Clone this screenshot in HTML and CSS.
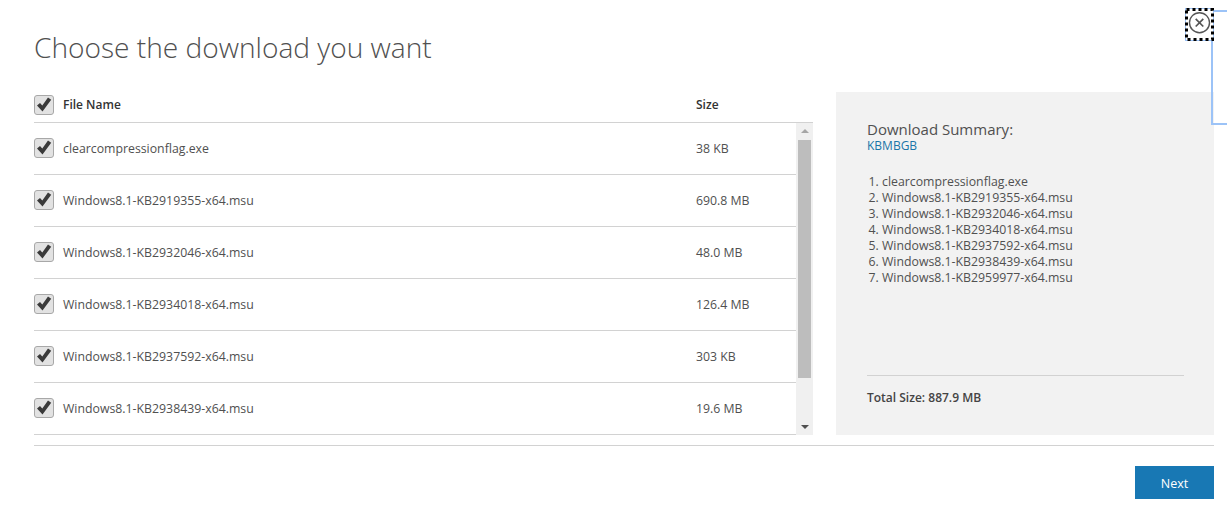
FILE: index.html
```html
<!DOCTYPE html>
<html lang="en">
<head>
    <meta charset="UTF-8">
    <title>Choose the download you want</title>
    <link rel="stylesheet" href="styles.css">
</head>
<body>
    <div class="dialog">
        <h1 class="title">Choose the download you want</h1>

        <div class="content">
            <div class="files">
                <div class="files-header">
                    <svg class="check" viewBox="0 0 20 20"><rect x="0.5" y="0.5" width="19" height="19" rx="2.500"/><path d="M3 10.500l3-2.500 2.300 2.500 5.700-8 3.200 2.200-8.700 11.800z"/></svg>
                    <span class="col-name">File Name</span>
                    <span class="col-size">Size</span>
                </div>
                <div class="files-body">
                    <div class="files-list">
                        <div class="file-row">
                            <svg class="check" viewBox="0 0 20 20"><rect x="0.5" y="0.5" width="19" height="19" rx="2.500"/><path d="M3 10.500l3-2.500 2.300 2.500 5.700-8 3.200 2.200-8.700 11.800z"/></svg>
                            <span class="col-name">clearcompressionflag.exe</span>
                            <span class="col-size">38 KB</span>
                        </div>
                        <div class="file-row">
                            <svg class="check" viewBox="0 0 20 20"><rect x="0.5" y="0.5" width="19" height="19" rx="2.500"/><path d="M3 10.500l3-2.500 2.300 2.500 5.700-8 3.200 2.200-8.700 11.800z"/></svg>
                            <span class="col-name">Windows8.1-KB2919355-x64.msu</span>
                            <span class="col-size">690.8 MB</span>
                        </div>
                        <div class="file-row">
                            <svg class="check" viewBox="0 0 20 20"><rect x="0.5" y="0.5" width="19" height="19" rx="2.500"/><path d="M3 10.500l3-2.500 2.300 2.500 5.700-8 3.200 2.200-8.700 11.800z"/></svg>
                            <span class="col-name">Windows8.1-KB2932046-x64.msu</span>
                            <span class="col-size">48.0 MB</span>
                        </div>
                        <div class="file-row">
                            <svg class="check" viewBox="0 0 20 20"><rect x="0.5" y="0.5" width="19" height="19" rx="2.500"/><path d="M3 10.500l3-2.500 2.300 2.500 5.700-8 3.200 2.200-8.700 11.800z"/></svg>
                            <span class="col-name">Windows8.1-KB2934018-x64.msu</span>
                            <span class="col-size">126.4 MB</span>
                        </div>
                        <div class="file-row">
                            <svg class="check" viewBox="0 0 20 20"><rect x="0.5" y="0.5" width="19" height="19" rx="2.500"/><path d="M3 10.500l3-2.500 2.300 2.500 5.700-8 3.200 2.200-8.700 11.800z"/></svg>
                            <span class="col-name">Windows8.1-KB2937592-x64.msu</span>
                            <span class="col-size">303 KB</span>
                        </div>
                        <div class="file-row">
                            <svg class="check" viewBox="0 0 20 20"><rect x="0.5" y="0.5" width="19" height="19" rx="2.500"/><path d="M3 10.500l3-2.500 2.300 2.500 5.700-8 3.200 2.200-8.700 11.800z"/></svg>
                            <span class="col-name">Windows8.1-KB2938439-x64.msu</span>
                            <span class="col-size">19.6 MB</span>
                        </div>
                    </div>
                    <div class="scrollbar">
                        <div class="arrow-up"></div>
                        <div class="thumb"></div>
                        <div class="arrow-down"></div>
                    </div>
                </div>
            </div>

            <div class="summary">
                <div class="summary-top">
                    <h2>Download Summary:</h2>
                    <div class="kb">KBMBGB</div>
                    <ol class="summary-list">
                        <li>clearcompressionflag.exe</li>
                        <li>Windows8.1-KB2919355-x64.msu</li>
                        <li>Windows8.1-KB2932046-x64.msu</li>
                        <li>Windows8.1-KB2934018-x64.msu</li>
                        <li>Windows8.1-KB2937592-x64.msu</li>
                        <li>Windows8.1-KB2938439-x64.msu</li>
                        <li>Windows8.1-KB2959977-x64.msu</li>
                    </ol>
                </div>
                <div class="total">Total Size: 887.9 MB</div>
            </div>
        </div>

        <div class="footer">
            <button class="next" type="button">Next</button>
        </div>
    </div>

    <!-- focus line and close button sit over the dialog -->
    <div class="focus-line"></div>
    <svg class="close" viewBox="0 0 29 33" aria-label="Close">
        <rect x="0.500" y="0.500" width="28" height="32" fill="#fff" stroke="#9cc3f7" stroke-width="1"/>
        <rect x="1.500" y="1.500" width="26" height="30" fill="#fff" stroke="#000" stroke-width="3" stroke-dasharray="3 3"/>
        <circle cx="14.500" cy="14.700" r="10" fill="none" stroke="#555" stroke-width="1.400"/>
        <path d="M10.700 10.900l7.600 7.600M18.300 10.900l-7.600 7.600" fill="none" stroke="#555" stroke-width="1.700"/>
    </svg>
</body>
</html>
```

FILE: styles.css
```css
* {
    box-sizing: border-box;
    margin: 0;
    padding: 0;
}

body {
    background: white;
    color: #505050;
    font-family: "Open Sans", "Noto Sans", sans-serif;
    font-size: 12.300px;
    height: 516px;
    overflow: hidden;
}

.dialog {
    padding: 0 13px 0 34px;
}

.title {
    font-size: 28.100px;
    font-weight: 300;
    line-height: 40px;
    padding-top: 27px;
    height: 92px;
    color: #505050;
}

.content {
    display: flex;
    gap: 23px;
    height: 343px;
}

.files {
    width: 779px;
    display: flex;
    flex-direction: column;
}

.files-header {
    height: 31px;
    display: flex;
    align-items: center;
    border-bottom: 1px solid #d2d2d2;
    padding-bottom: 6px;
    font-size: 12px;
    font-weight: 600;
    color: #333;
}

.files-header .check {
    margin-top: 1px;
}

.file-row .check {
    margin-bottom: 1px;
}

.check {
    width: 20px;
    height: 20px;
    flex: none;
    margin-right: 9px;
}

.check rect {
    fill: #e2e2e2;
    stroke: #a8a8a8;
}

.check path {
    fill: #3a3a3a;
}

.col-name {
    flex: 1;
}

.col-size {
    width: 117px;
}

.file-row .col-size {
    width: 100px;
}

.files-body {
    flex: 1;
    display: flex;
    min-height: 0;
}

.files-list {
    width: 762px;
}

.file-row {
    height: 52px;
    display: flex;
    align-items: center;
    border-bottom: 1px solid #d2d2d2;
}

.scrollbar {
    width: 17px;
    background: #f0f0f0;
    padding: 0 2px;
    display: flex;
    flex-direction: column;
    align-items: center;
}

.arrow-up,
.arrow-down {
    width: 0;
    height: 0;
    border-left: 4px solid transparent;
    border-right: 4px solid transparent;
}

.arrow-up {
    border-bottom: 4px solid #a6a6a6;
    margin-top: 6px;
}

.thumb {
    width: 13px;
    height: 238px;
    background: #bdbdbd;
    margin-top: 7px;
}

.arrow-down {
    border-top: 4px solid #505050;
    margin-top: 47px;
}

.summary {
    width: 378px;
    background: #f2f2f2;
    padding: 28px 30px 0 31px;
    display: flex;
    flex-direction: column;
}

.summary-top {
    height: 256px;
    border-bottom: 1px solid #d2d2d2;
}

.summary h2 {
    font-size: 15px;
    font-weight: 400;
    line-height: 18px;
    color: #505050;
}

.kb {
    color: #1a75a8;
    font-size: 12px;
    line-height: 14px;
    margin-top: 1px;
}

.summary-list {
    margin-top: 21px;
    padding-left: 15px;
    line-height: 16px;
}

.summary-list li::marker {
    color: #505050;
}

.total {
    margin-top: 13px;
    font-size: 12px;
    font-weight: 600;
    color: #444;
}

.footer {
    margin-top: 10px;
    border-top: 1px solid #d2d2d2;
    padding-top: 20px;
    display: flex;
    justify-content: flex-end;
}

.next {
    width: 79px;
    height: 33px;
    padding-top: 1px;
    border: none;
    background: #1878b4;
    color: white;
    font-family: inherit;
    font-size: 12.500px;
}

.focus-line {
    position: absolute;
    left: 1211px;
    top: 10px;
    width: 16px;
    height: 115px;
    border: 2px solid #9cc3f7;
    border-right: none;
}

.close {
    position: absolute;
    left: 1185px;
    top: 8px;
    width: 29px;
    height: 33px;
}
```
